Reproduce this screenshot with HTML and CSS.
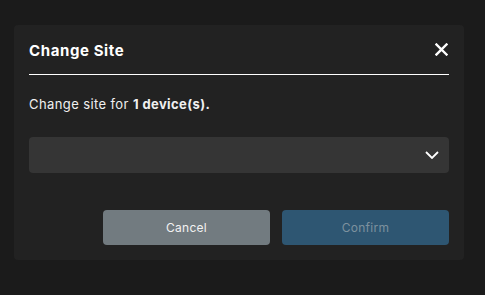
FILE: index.html
```html
<!DOCTYPE html>
<html lang="en">

<head>
    <meta charset="UTF-8">
    <meta name="viewport" content="width=device-width, initial-scale=1.0">
    <title>Change Site</title>
    <link rel="stylesheet" href="styles.css">
</head>

<body>
    <div class="dialog">
        <div class="dialog-header">
            <h2>Change Site</h2>
            <button class="close" aria-label="Close">
                <svg width="13" height="13" viewBox="0 0 13 13">
                    <path d="M1.5 1.5 L11.5 11.5 M11.5 1.5 L1.5 11.5" stroke="#fff" stroke-width="2.4" stroke-linecap="square" fill="none" />
                </svg>
            </button>
        </div>
        <p class="desc">Change site for <strong>1 device(s).</strong></p>
        <div class="select">
            <svg width="14" height="8" viewBox="0 0 14 8">
                <path d="M1 1 L7 7 L13 1" stroke="#fff" stroke-width="1.8" fill="none" />
            </svg>
        </div>
        <div class="actions">
            <button class="btn cancel">Cancel</button>
            <button class="btn confirm">Confirm</button>
        </div>
    </div>
</body>

</html>
```

FILE: styles.css
```css
* {
    margin: 0;
    padding: 0;
    box-sizing: border-box;
}

body {
    background-color: #1b1b1b;
    padding: 25px 21px 35px 14px;
    font-family: "Inter", "Liberation Sans", sans-serif;
    color: #eee;
}

.dialog {
    width: 450px;
    padding: 0 15px 15px;
    background-color: #222;
    border-radius: 4px;
}

.dialog-header {
    height: 50px;
    display: flex;
    align-items: center;
    justify-content: space-between;
    border-bottom: 1px solid #fff;
}

.dialog-header h2 {
    font-size: 15px;
    font-weight: 700;
    letter-spacing: 0.6px;
    color: #fff;
    padding-top: 2px;
}

.close {
    width: 13px;
    height: 13px;
    margin-right: 1px;
    border: none;
    background: none;
    display: flex;
}

.desc {
    margin-top: 19px;
    font-size: 13px;
    line-height: 20px;
    letter-spacing: 0.4px;
    color: #f0f0f0;
}

.desc strong {
    font-weight: 700;
}

.select {
    height: 36px;
    margin-top: 23px;
    padding-right: 10px;
    display: flex;
    align-items: center;
    justify-content: flex-end;
    background-color: #353535;
    border-radius: 4px;
}

.actions {
    margin-top: 37px;
    display: flex;
    justify-content: flex-end;
    gap: 12px;
}

.btn {
    width: 167px;
    height: 35px;
    border: none;
    border-radius: 4px;
    font-family: inherit;
    font-size: 12px;
    letter-spacing: 0.3px;
}

.cancel {
    background-color: #727b80;
    color: #f2f2f2;
}

.confirm {
    background-color: #2e5672;
    color: #7d919e;
}
```
